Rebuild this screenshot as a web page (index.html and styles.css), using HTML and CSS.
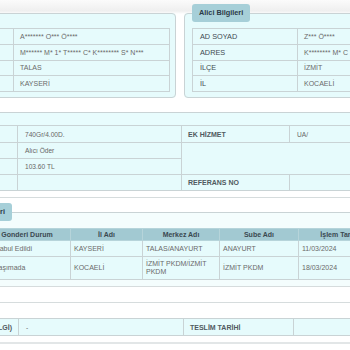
FILE: index.html
```html
<!DOCTYPE html>
<html lang="tr">
<head>
    <meta charset="UTF-8">
    <title> Gönderi Sorgulama </title>
    <link rel="stylesheet" href="styles.css">
</head>
<body>
    <div class="page">
        <div class="parties">
            <fieldset class="panel sender">
                <table class="info">
                    <tr><th></th><td>A******* O*** Ö****</td></tr>
                    <tr><th></th><td>M****** M* 1* T***** C* K******** S* N***</td></tr>
                    <tr><th></th><td>TALAS</td></tr>
                    <tr><th></th><td>KAYSERİ</td></tr>
                </table>
            </fieldset>
            <fieldset class="panel">
                <legend> Alici Bilgileri </legend>
                <table class="info">
                    <tr><th>AD SOYAD</th><td>Z*** Ö****</td></tr>
                    <tr><th>ADRES</th><td>K******** M* C</td></tr>
                    <tr><th>İLÇE</th><td>İZMİT</td></tr>
                    <tr><th>İL</th><td>KOCAELİ</td></tr>
                </table>
            </fieldset>
        </div>

        <div class="details_box">
            <table class="details">
                <colgroup><col class="c1"><col class="c2"><col class="c3"><col class="c4"></colgroup>
                <tr class="band"><th colspan="4"></th></tr>
                <tr class="r1"><th></th><td>740Gr/4.00D.</td><th>EK HİZMET</th><td>UA/</td></tr>
                <tr class="r2"><th></th><td>Alıcı Öder</td><td class="blank" colspan="2" rowspan="2"></td></tr>
                <tr class="r3"><th></th><td>103.60 TL</td></tr>
                <tr class="r3"><th></th><td></td><th>REFERANS NO</th><td></td></tr>
            </table>
        </div>

        <fieldset class="moves">
            <legend><span class="legend_text">Gönderi Hareketleri</span></legend>
            <table class="moves_table">
                <colgroup><col class="m1"><col class="m2"><col class="m3"><col class="m4"><col class="m5"><col class="m6"><col></colgroup>
                <tr><th></th><th class="state">Gonderi Durum</th><th>İl Adı</th><th>Merkez Adı</th><th>Sube Adı</th><th>İşlem Tarihi</th><th></th></tr>
                <tr><td></td><td class="state">Kabul Edildi</td><td>KAYSERİ</td><td>TALAS/ANAYURT</td><td>ANAYURT</td><td>11/03/2024</td><td></td></tr>
                <tr class="tall"><td></td><td class="state">Taşımada</td><td>KOCAELİ</td><td>İZMİT PKDM/İZMİT PKDM</td><td>İZMİT PKDM</td><td>18/03/2024</td><td></td></tr>
            </table>
        </fieldset>

        <div class="spacer"></div>

        <table class="details delivery">
            <colgroup><col class="d1"><col class="d2"><col class="d3"><col class="d4"></colgroup>
            <tr><th class="cut">BİLGİ)</th><td>-</td><th>TESLİM TARİHİ</th><td></td></tr>
        </table>
        <div class="foot"></div>
    </div>
</body>
</html>
```

FILE: styles.css
```css
* {
    margin: 0px;
    padding: 0px;
    box-sizing: border-box;
}

body {
    overflow: hidden;
    height: 350px;
    background-image: linear-gradient(#fbfbfb, #efefef 11px, #ffffff 14px);
    font-family: "Liberation Sans", Arial, Helvetica, sans-serif;
    font-size: 7px;
    color: #6a6a6a;
}

.page {
    margin-left: -100px;
    width: 560px;
    padding-top: 4px;
}

table {
    border-collapse: collapse;
}

th, td {
    border: 1px solid #c9d3d5;
    text-align: left;
    vertical-align: middle;
    white-space: nowrap;
}

/* top two boxes */

.parties {
    display: flex;
    gap: 8px;
}

.panel {
    flex: 1;
    min-width: 0;
    border: 1px solid #c9d3d5;
    border-radius: 4px;
    background-color: #e6fbfc;
    padding: 6px 5px 5px 7px;
}

.panel.sender {
    margin-top: 9px;
    padding-top: 14px;
}

legend {
    background-color: #a6cfd8;
    color: #2b3a47;
    font-weight: bold;
    font-size: 7.3px;
    height: 18px;
    line-height: 18px;
    padding: 0px 7px;
    border-radius: 3px;
}

.info {
    width: 100%;
    background-color: #e6fbfc;
}

.info th {
    width: 105px;
    height: 15.75px;
    padding-left: 7px;
    font-weight: normal;
    font-size: 7.3px;
    color: #3f4a52;
}

.info td {
    padding-left: 6px;
}

/* gönderi detail table */

.details_box {
    margin-top: 14px;
    padding-bottom: 6px;
    border-bottom: 1px solid #d6dcdd;
}

.details {
    width: 560px;
    background-color: #e6fbfc;
    table-layout: fixed;
}

.details .c1 { width: 117px; }
.details .c2 { width: 164px; }
.details .c3 { width: 108px; }

.details th {
    font-weight: bold;
    color: #505a60;
    padding-left: 6px;
}

.details td {
    padding-left: 7px;
    color: #666666;
    font-size: 6.6px;
}

.details .band th {
    height: 13px;
    background-color: #e8fcfd;
}

.details .r1 th, .details .r1 td {
    height: 17px;
}

.details .r2 th, .details .r2 td, .details .r3 th, .details .r3 td {
    height: 16px;
}

/* hareket box */

.moves {
    margin-top: 5px;
    border: none;
    border-top: 1px solid #c9d3d5;
    background-color: #f4fdfd;
    padding: 7px 0px 6px 0px;
}

.moves legend {
    width: 100px;
    margin-left: 12px;
}

.legend_text {
    display: block;
    text-align: right;
}

.moves_table {
    width: 100%;
    table-layout: fixed;
    background-color: #e6fbfc;
}

.moves_table .m1 { width: 88px; }
.moves_table .m2 { width: 82px; }
.moves_table .m3 { width: 72px; }
.moves_table .m4 { width: 77px; }
.moves_table .m5 { width: 79px; }
.moves_table .m6 { width: 82px; }

.moves_table th {
    background-color: #a2c9d2;
    color: #3a4850;
    font-weight: bold;
    text-align: center;
    height: 12px;
    border-color: #b6d4da;
}

.moves_table th.state {
    padding-right: 5px;
}

.moves_table td {
    height: 16px;
    padding-left: 3px;
    white-space: normal;
    line-height: 8px;
}

.moves_table td.state {
    padding-left: 6px;
}

.moves_table .tall td {
    height: 23px;
}

.spacer {
    height: 17px;
    border-top: 1px solid #d6dcdd;
    border-bottom: 1px solid #d6dcdd;
}

.delivery {
    margin-top: 15px;
}

.delivery .d1 { width: 118px; }
.delivery .d2 { width: 165px; }
.delivery .d3 { width: 110px; }

.delivery th, .delivery td {
    height: 17px;
}

.delivery th.cut {
    text-align: right;
    padding-right: 6px;
}

.foot {
    margin-top: 6px;
    border-top: 2px solid #e2e6e7;
}
```
